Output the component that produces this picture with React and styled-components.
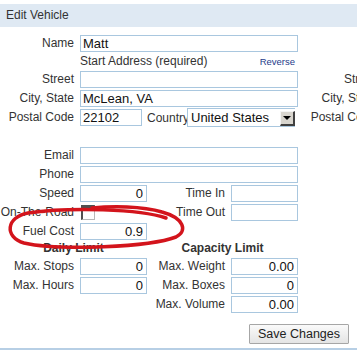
import React from "react";
import styled, { createGlobalStyle } from "styled-components";

const Global = createGlobalStyle`
  html, body { margin: 0; padding: 0; overflow: hidden; background: #fff; }
  body { font-family: "Liberation Sans", Arial, sans-serif; }
`;

const Panel = styled.div`
  position: relative;
  width: 357px;
  height: 350px;
  padding-top: 4px;
  box-sizing: border-box;
  overflow: hidden;
  color: #333;
`;

const Header = styled.div`
  height: 23px;
  line-height: 23px;
  padding-left: 6px;
  background: #dfe9f3;
  font-size: 12px;
  color: #333;
`;

const Form = styled.div`
  padding-top: 8px;
  display: flex;
  flex-direction: column;
  gap: 2px;
`;

const Grid = styled.div`
  display: grid;
  grid-template-columns: 80px 67px 84px 67px;
  grid-template-rows: ${(p) => p.$rows || "17px"};
  row-gap: 2px;
  align-items: center;
  width: 302px;
  flex: none;
  margin-top: ${(p) => p.$top || "0px"};
`;

const AddressPair = styled.div`
  display: flex;
  width: 604px;
`;

const Label = styled.div`
  grid-column: ${(p) => p.$col || "auto"};
  text-align: right;
  padding-right: 6px;
  font-size: 12px;
  line-height: 17px;
  white-space: nowrap;
  color: #333;
`;

const Field = styled.input`
  grid-column: ${(p) => (p.$span ? `span ${p.$span}` : "auto")};
  width: ${(p) => p.$width || "100%"};
  height: 17px;
  box-sizing: border-box;
  margin: 0;
  border: 1px solid #a9c7df;
  padding: 0 ${(p) => (p.$right ? "3px" : "2px")};
  text-align: ${(p) => (p.$right ? "right" : "left")};
  font-family: "Liberation Sans", Arial, sans-serif;
  font-size: 13px;
  color: #111;
  background: #fff;
  outline: none;
`;

const Caption = styled.div`
  grid-column: 2 / span 3;
  display: flex;
  justify-content: space-between;
  align-items: baseline;
  font-size: 12px;
  line-height: 15px;
  padding-right: 3px;
  color: #333;
`;

const ReverseLink = styled.span`
  font-size: 9.5px;
  color: #1d3b8a;
`;

const PostalCell = styled.div`
  grid-column: 2 / span 3;
  display: flex;
  align-items: center;
  height: 17px;
`;

const CountryLabel = styled.span`
  width: 40px;
  margin-left: 5px;
  overflow: hidden;
  white-space: nowrap;
  font-size: 12px;
  color: #333;
`;

const Select = styled.div`
  display: flex;
  align-items: center;
  width: 108px;
  height: 19px;
  box-sizing: border-box;
  margin-top: -1px;
  border: 1px solid #a9c7df;
  border-right: none;
  background: #fff;
`;

const SelectText = styled.span`
  flex: 1;
  padding-left: 3px;
  font-size: 13px;
  color: #111;
  white-space: nowrap;
`;

const SelectButton = styled.span`
  width: 15px;
  height: 15px;
  box-sizing: border-box;
  align-self: flex-end;
  margin-bottom: 0px;
  display: flex;
  align-items: center;
  justify-content: center;
  background: #d8d5ce;
  border-top: 1px solid #f4f4f4;
  border-left: 1px solid #f4f4f4;
  border-right: 2px solid #404040;
  border-bottom: 2px solid #404040;
`;

const Arrow = styled.span`
  width: 0;
  height: 0;
  border-left: 4px solid transparent;
  border-right: 4px solid transparent;
  border-top: 4px solid #000;
`;

const CheckBox = styled.span`
  width: 14px;
  height: 15px;
  box-sizing: border-box;
  margin-left: 1px;
  background: #fff;
  border-top: 3px solid #505050;
  border-left: 2px solid #505050;
  border-right: 1px solid #b8b8b8;
  border-bottom: 1px solid #b8b8b8;
`;

const Heading = styled.div`
  grid-column: ${(p) => p.$col};
  text-align: center;
  font-weight: bold;
  font-size: 12px;
  line-height: 12px;
  align-self: start;
  color: #333;
`;

const Footer = styled.div`
  display: flex;
  justify-content: flex-end;
  padding-right: 8px;
  margin-top: 11px;
`;

const SaveButton = styled.button`
  width: 100px;
  height: 20px;
  margin: 0;
  padding: 0;
  border: 1px solid #a6a6a6;
  border-radius: 1px;
  background: linear-gradient(#fafafa, #e4e4e4);
  font-family: "Liberation Sans", Arial, sans-serif;
  font-size: 12.5px;
  color: #222;
`;

const BottomRule = styled.div`
  margin-top: 4px;
  height: 2px;
  background: #b7cfe5;
`;

const Annotation = styled.svg`
  position: absolute;
  left: 0;
  top: 0;
  pointer-events: none;
`;

function AddressBlock({ caption, reverse, city, postal, country }) {
  return (
    <Grid $rows="15px 17px 17px 17px">
      <Caption>
        <span>{caption}</span>
        {reverse && <ReverseLink>Reverse</ReverseLink>}
      </Caption>
      <Label>Street</Label>
      <Field $span={3} readOnly value="" />
      <Label>City, State</Label>
      <Field $span={3} readOnly value={city} />
      <Label>Postal Code</Label>
      <PostalCell>
        <Field $width="62px" readOnly value={postal} />
        <CountryLabel>Country</CountryLabel>
        <Select>
          <SelectText>{country}</SelectText>
          <SelectButton>
            <Arrow />
          </SelectButton>
        </Select>
      </PostalCell>
    </Grid>
  );
}

export default function App() {
  return (
    <>
      <Global />
      <Panel>
        <Header>Edit Vehicle</Header>
        <Form>
          <Grid>
            <Label>Name</Label>
            <Field $span={3} readOnly value="Matt" />
          </Grid>
          <AddressPair>
            <AddressBlock
              caption="Start Address (required)"
              reverse
              city="McLean, VA"
              postal="22102"
              country="United States"
            />
            <AddressBlock
              caption="End Address"
              city=""
              postal=""
              country="United States"
            />
          </AddressPair>
          <Grid
            $top="19px"
            $rows="17px 17px 17px 17px 17px 14px 17px 17px 17px"
          >
            <Label>Email</Label>
            <Field $span={3} readOnly value="" />
            <Label>Phone</Label>
            <Field $span={3} readOnly value="" />
            <Label>Speed</Label>
            <Field $right readOnly value="0" />
            <Label>Time In</Label>
            <Field readOnly value="" />
            <Label>On-The-Road</Label>
            <CheckBox />
            <Label>Time Out</Label>
            <Field readOnly value="" />
            <Label>Fuel Cost</Label>
            <Field $right readOnly value="0.9" />
            <span />
            <span />
            <Heading $col="1 / span 2">Daily Limit</Heading>
            <Heading $col="3 / span 2">Capacity Limit</Heading>
            <Label>Max. Stops</Label>
            <Field $right readOnly value="0" />
            <Label>Max. Weight</Label>
            <Field $right readOnly value="0.00" />
            <Label>Max. Hours</Label>
            <Field $right readOnly value="0" />
            <Label>Max. Boxes</Label>
            <Field $right readOnly value="0" />
            <Label $col="3">Max. Volume</Label>
            <Field $right readOnly value="0.00" />
          </Grid>
        </Form>
        <Footer>
          <SaveButton>Save Changes</SaveButton>
        </Footer>
        <BottomRule />
        <Annotation width="357" height="350" viewBox="0 0 357 350">
          <path
            d="M 166 218 C 140 209, 70 207, 28 213 C 6 217, 4 237, 24 243 C 60 251, 150 247, 176 237 C 188 231, 184 218, 162 212 C 142 206, 112 206, 92 208"
            fill="none"
            stroke="#d3141c"
            strokeWidth="3.5"
            strokeLinecap="round"
          />
        </Annotation>
      </Panel>
    </>
  );
}
